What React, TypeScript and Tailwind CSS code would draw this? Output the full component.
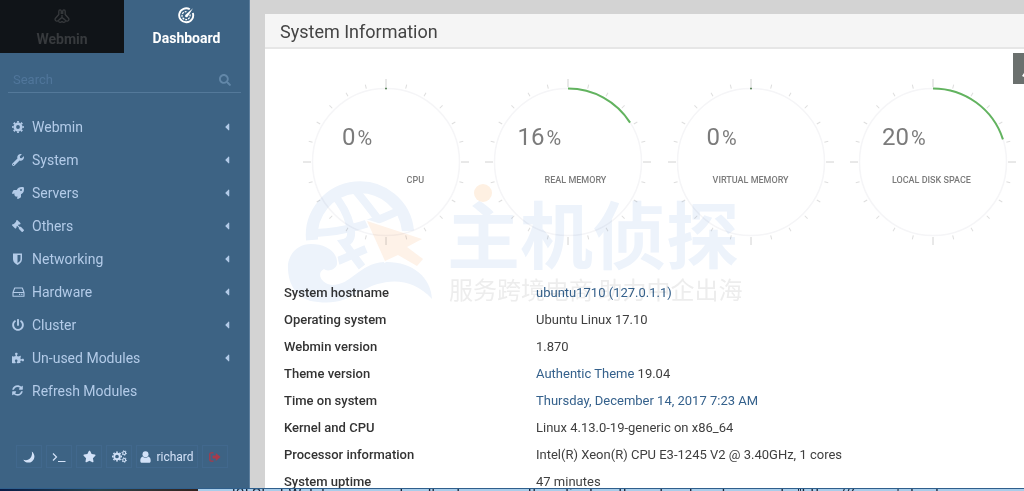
import React from "react";
import {
  FaWrench,
  FaRocket,
  FaGavel,
  FaPowerOff,
  FaPuzzlePiece,
  FaSyncAlt,
  FaStar,
  FaSearch,
  FaCaretLeft,
} from "react-icons/fa";

function WebminLogo() {
  return (
    <svg width="16" height="16" viewBox="0 0 16 16" fill="none" stroke="currentColor" strokeWidth="1.3" strokeLinejoin="round">
      <path d="M4.800 7V3.400C4.800 1.400 7.300 1.400 7.300 3.200V6M8.700 6V3.200C8.700 1.400 11.200 1.400 11.200 3.400V7" />
      <path d="M4.800 6.500 1.500 10.200C.3 12.200 2.200 13.800 3.900 12.700L6.200 11" />
      <path d="M11.200 6.500 14.500 10.200C15.700 12.200 13.800 13.800 12.100 12.700L9.800 11" />
      <path d="M4.400 13.200C5.300 14.800 6.800 14.500 8 13.600 9.200 14.500 10.700 14.800 11.600 13.200M8 7v2.600M5.800 11 8 9.600l2.200 1.400" />
    </svg>
  );
}

function DashboardLogo() {
  return (
    <svg width="17" height="17" viewBox="0 0 17 17" fill="none" stroke="currentColor">
      <path d="M14.800 6A7 7 0 1 1 11.800 2.300" strokeWidth="1.900" />
      <path d="M11.900 7.500A4 4 0 1 1 8.500 4.600" strokeWidth="1.300" strokeDasharray="2 1" />
      <path d="M15 1.300 9.800 9.600A1.500 1.500 0 0 1 7.300 7.900Z" fill="currentColor" stroke="none" />
    </svg>
  );
}

function Gear() {
  return (
    <svg width="12" height="12" viewBox="0 0 12 12" fill="none" stroke="currentColor">
      <circle cx="6" cy="6" r="3.200" strokeWidth="2.600" />
      <circle cx="6" cy="6" r="5.100" strokeWidth="1.600" pathLength={16} strokeDasharray="1 1" strokeDashoffset="0.5" />
    </svg>
  );
}

function Gears() {
  return (
    <svg width="15" height="13" viewBox="0 0 15 13" fill="none" stroke="currentColor">
      <circle cx="5" cy="6.500" r="2.800" strokeWidth="1.900" />
      <circle cx="5" cy="6.500" r="4.300" strokeWidth="1.400" pathLength={16} strokeDasharray="1 1" strokeDashoffset="0.5" />
      <circle cx="12.200" cy="3" r="1.500" strokeWidth="1.100" />
      <circle cx="12.200" cy="3" r="2.300" strokeWidth="0.900" pathLength={12} strokeDasharray="1 1" />
      <circle cx="12.200" cy="10" r="1.500" strokeWidth="1.100" />
      <circle cx="12.200" cy="10" r="2.300" strokeWidth="0.900" pathLength={12} strokeDasharray="1 1" />
    </svg>
  );
}

function Shield() {
  return (
    <svg width="11" height="12" viewBox="0 0 11 12" fill="currentColor">
      <path
        fillRule="evenodd"
        d="M1 .5h9v5.800c0 2.800-2.400 4.600-4.500 5.600C3.400 10.900 1 9.100 1 6.300ZM5.500 2v8.100C7 9.200 8.500 8 8.500 6.300V2Z"
      />
    </svg>
  );
}

function Drive() {
  return (
    <svg width="13" height="12" viewBox="0 0 13 12" fill="none" stroke="currentColor" strokeLinejoin="round">
      <path d="M1 6.500 2.700 2h7.600L12 6.500V10.200H1ZM1 6.500h11" strokeWidth="1.100" />
      <path d="M7 8.400h1.200M9.200 8.400h1.200" strokeWidth="1.200" />
    </svg>
  );
}

function SignOut() {
  return (
    <svg width="12" height="10" viewBox="0 0 12 10" fill="none" stroke="currentColor">
      <path d="M4.500.8H2.200Q.8.8.8 2.200v5.600Q.8 9.200 2.200 9.200h2.300" strokeWidth="1.300" />
      <path d="M3.500 3.400h3.300V1L11.500 5 6.800 9V6.600H3.500Z" fill="currentColor" stroke="none" />
    </svg>
  );
}

function Crescent() {
  return (
    <svg width="12" height="12" viewBox="0 0 12 12" fill="currentColor">
      <path d="M8.800.4C12.200 3 12.300 8 9 10.400 6 12.500 2 11.700.3 8.700 3 9.700 6 9 7.600 6.800 9 4.900 9.300 2.600 8.800.4Z" />
    </svg>
  );
}

function Prompt() {
  return (
    <svg width="14" height="12" viewBox="0 0 14 12" fill="none" stroke="currentColor" strokeWidth="1.200">
      <path d="M1 2.500 4.500 6 1 9.500M6 10.500h7.500" />
    </svg>
  );
}

function Person() {
  return (
    <svg width="11" height="12" viewBox="0 0 11 12" fill="currentColor">
      <circle cx="5.500" cy="3.200" r="3" />
      <path d="M2.600 5.600C1 6.200.3 7.800.3 9.900c0 1.200.8 1.900 1.800 1.900h6.800c1 0 1.800-.7 1.800-1.900 0-2.100-.7-3.700-2.300-4.300a4 4 0 0 1-5.800 0Z" />
    </svg>
  );
}

const menu = [
  { label: "Webmin", icon: <Gear />, sub: true },
  { label: "System", icon: <FaWrench size={12} />, sub: true },
  { label: "Servers", icon: <FaRocket size={12} />, sub: true },
  { label: "Others", icon: <FaGavel size={12} className="-scale-x-100" />, sub: true },
  { label: "Networking", icon: <Shield />, sub: true },
  { label: "Hardware", icon: <Drive />, sub: true },
  { label: "Cluster", icon: <FaPowerOff size={12} />, sub: true },
  { label: "Un-used Modules", icon: <FaPuzzlePiece size={12} />, sub: true },
  { label: "Refresh Modules", icon: <FaSyncAlt size={11} />, sub: false },
];

const tools = [
  { label: "Night mode", icon: <Crescent /> },
  { label: "Terminal", icon: <Prompt /> },
  { label: "Favorites", icon: <FaStar size={13} /> },
  { label: "Theme settings", icon: <Gears /> },
];

const toolClass = "flex h-[23px] items-center justify-center border border-[#446d92]/60";

function Sidebar() {
  return (
    <aside className="flex w-[250px] shrink-0 flex-col border-r border-[#5d7f9e] bg-[#3d6384] text-[#b3cbe8]">
      <nav className="grid h-[53px] grid-cols-[124px_1fr]">
        <button className="flex flex-col items-center bg-[#101418] pt-[8px] text-sm font-bold text-[#373a3d]">
          <WebminLogo />
          <span className="mt-[5px] leading-[20px]">Webmin</span>
        </button>
        <button className="flex flex-col items-center pt-[7px] text-sm font-bold text-white">
          <DashboardLogo />
          <span className="mt-[4px] leading-[20px]">Dashboard</span>
        </button>
      </nav>
      <label className="mx-2 mt-[15px] flex h-[25px] items-center border-b border-[#54799a] pr-[10px] pl-[5px]">
        <input
          aria-label="Search"
          placeholder="Search"
          className="min-w-0 flex-1 bg-transparent text-[13px] outline-none placeholder:text-[#50769b]"
        />
        <FaSearch size={12} className="text-[#6287a8]" />
      </label>
      <ul className="mt-[17px]">
        {menu.map((m) => (
          <li key={m.label}>
            <a href="#" className="flex h-[33px] items-center pr-[16px] pl-3 text-sm">
              <span className="flex w-[20px] items-center">{m.icon}</span>
              <span className="flex-1">{m.label}</span>
              {m.sub && <FaCaretLeft size={12} />}
            </a>
          </li>
        ))}
      </ul>
      <div className="mt-[38px] flex gap-1 pl-4">
        {tools.map((t) => (
          <button key={t.label} aria-label={t.label} className={toolClass + " w-[26px] text-[#d3e2f8]"}>
            {t.icon}
          </button>
        ))}
        <button className={toolClass + " w-[62px] gap-[5px] text-xs text-[#d3e2f8]"}>
          <Person />
          richard
        </button>
        <button aria-label="Log out" className={toolClass + " w-[26px] text-[#a83a4a]"}>
          <SignOut />
        </button>
      </div>
    </aside>
  );
}

const gauges = [
  { label: "CPU", value: 0 },
  { label: "REAL MEMORY", value: 16 },
  { label: "VIRTUAL MEMORY", value: 0 },
  { label: "LOCAL DISK SPACE", value: 20 },
];

const ticks = Array.from({ length: 24 }, (_, i) => i);

function Gauge({ label, value }: { label: string; value: number }) {
  return (
    <div className="grid place-items-center">
      <svg className="col-start-1 row-start-1" width="168" height="168" viewBox="-84 -84 168 168" fill="none">
        <circle r="73.500" stroke="#f5f5f7" strokeWidth="1.500" />
        {ticks.map((i) => (
          <line
            key={i}
            y1={i % 6 === 0 ? -75 : -76}
            y2={i % 6 === 0 ? -83 : -80}
            stroke={i % 6 === 0 ? "#d2d2d2" : "#dedede"}
            transform={`rotate(${i * 15})`}
          />
        ))}
        {value > 0 ? (
          <circle
            r="73.500"
            stroke="#62b35f"
            strokeWidth="2"
            pathLength={100}
            strokeDasharray={`${value} 100`}
            transform="rotate(-90)"
          />
        ) : (
          <circle cy="-73.500" r="1" fill="#4f7a4f" />
        )}
      </svg>
      <div className="col-start-1 row-start-1 flex w-[132px] flex-col pr-[28px] pb-[16px] text-[#7b7b7b]">
        <span className="w-[74px] text-center text-2xl leading-[28px]">
          {value}
          <span className="ml-[2px] text-xl">%</span>
        </span>
        <span className="mt-[22px] text-right text-[9px] leading-[12px] font-medium whitespace-nowrap">{label}</span>
      </div>
    </div>
  );
}

const link = "text-[#35618c]";
const rows: { name: string; value: React.ReactNode }[] = [
  { name: "System hostname", value: <a href="#" className={link}>ubuntu1710 (127.0.1.1)</a> },
  { name: "Operating system", value: "Ubuntu Linux 17.10" },
  { name: "Webmin version", value: "1.870" },
  { name: "Theme version", value: <><a href="#" className={link}>Authentic Theme</a> 19.04</> },
  { name: "Time on system", value: <a href="#" className={link}>Thursday, December 14, 2017 7:23 AM</a> },
  { name: "Kernel and CPU", value: "Linux 4.13.0-19-generic on x86_64" },
  { name: "Processor information", value: "Intel(R) Xeon(R) CPU E3-1245 V2 @ 3.40GHz, 1 cores" },
  { name: "System uptime", value: "47 minutes" },
];

function Watermark() {
  return (
    <div className="pointer-events-none absolute top-[159px] left-[19px] flex mix-blend-multiply">
      <svg width="160" height="136" viewBox="284 174 160 136">
        <g fill="none" stroke="#edf3fb">
          <path d="M312 241A48 48 0 0 1 408 232" strokeWidth="12" />
          <path d="M316 234Q360 232 404 209" strokeWidth="8" />
          <path d="M356 192Q366 204 378 220" strokeWidth="8" />
          <path d="M334 196Q346 210 350 226T344 244L362 268" strokeWidth="8" />
          <path d="M338 262 366 250" strokeWidth="8" />
        </g>
        <g stroke="#ffffff" strokeWidth="3" paintOrder="stroke">
          <path
            d="M318 303C296 302 287 284 288 265c2-12 11-20 23-20 15 0 27 8 26 20-1 6-10 8-13 5-8 4-3 15 8 16 20 0 26-21 52-23 28-1 47 15 48 37-22-24-50-20-72-7-14 8-25 12-42 10Z"
            fill="#edf3fb"
          />
          <path d="M367 222 422 240 407 248 423 260 417 267 398 256 385 262Z" fill="#fef2e8" />
        </g>
      </svg>
      <div className="relative ml-[3px] flex flex-col pt-[14px]">
        <span className="absolute top-[11px] left-[27px] size-[18px] rounded-full bg-[#fef0e2]" />
        <span className="font-['Noto_Sans_CJK_SC','Noto_Sans',sans-serif] text-[73px] leading-[88px] font-bold whitespace-nowrap text-[#edf3fb]">
          主机侦探
        </span>
        <span className="pl-[2px] font-['Noto_Sans_CJK_SC','Noto_Sans',sans-serif] text-[24px] leading-[28px] whitespace-nowrap text-[#ededed]">
          服务跨境电商 助力中企出海
        </span>
      </div>
    </div>
  );
}

function InfoPanel() {
  return (
    <section className="relative bg-white">
      <h1 className="h-[35px] border-b-2 border-[#e6e6e6] bg-[#f5f5f5] pl-[15px] text-lg leading-[35px] text-[#444]">
        System Information
      </h1>
      <div className="grid grid-cols-4 pt-[29px] pl-[30px]">
        {gauges.map((g) => (
          <Gauge key={g.label} {...g} />
        ))}
      </div>
      <table className="mt-[33px] ml-[19px] text-left text-[13px] text-[#3f3f3f]">
        <tbody>
          {rows.map((r) => (
            <tr key={r.name} className="h-[27px]">
              <th scope="row" className="w-[252px] p-0 font-medium text-[#333]">{r.name}</th>
              <td className="p-0">{r.value}</td>
            </tr>
          ))}
        </tbody>
      </table>
      <Watermark />
      <button
        aria-label="Open panel"
        className="absolute top-[39px] right-0 flex h-[31px] w-[11px] items-end justify-end bg-[#6b706e] pb-[7px] text-white"
      >
        <svg width="2" height="4" viewBox="0 0 2 4" fill="currentColor">
          <path d="M2 0v4L0 3Z" />
        </svg>
      </button>
    </section>
  );
}

export default function App() {
  return (
    <div className="flex h-screen flex-col overflow-hidden font-['Roboto',sans-serif]">
      <div className="flex min-h-0 flex-1 overflow-hidden">
        <Sidebar />
        <main className="min-w-0 flex-1 overflow-hidden bg-[#d3d3d3] pt-[14px] pl-[15px]">
          <InfoPanel />
        </main>
      </div>
      <footer className="flex h-[3px] shrink-0 overflow-hidden border-t border-[#2f5f8c] bg-[#a9cdea]">
        <div className="w-[198px] shrink-0 bg-linear-to-r from-[#0a1c48] via-[#27424b] to-[#33231f]" />
        <p className="-mt-[5px] pl-[34px] text-[15px] leading-[20px] whitespace-nowrap text-[#17243a]">
          [2] Start Web browser on localhost or on another client on the network and access to "https://(server's hostname
        </p>
      </footer>
    </div>
  );
}
